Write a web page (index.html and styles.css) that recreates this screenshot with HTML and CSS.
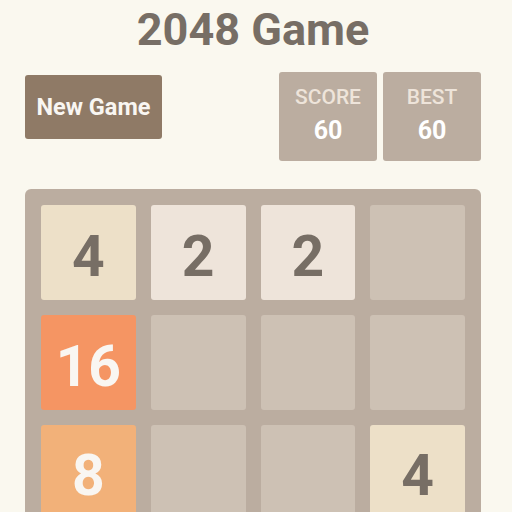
FILE: index.html
```html
<!DOCTYPE html>
<html>
<head>
<meta charset="utf-8">
<link rel="stylesheet" href="styles.css">
</head>
<body>
<div class="container">
  <h1 class="title">2048 Game</h1>
  <div class="toolbar">
    <button class="new-game">New Game</button>
    <div class="scores">
      <div class="score-box"><div class="score-label">SCORE</div><div class="score-value">60</div></div>
      <div class="score-box"><div class="score-label">BEST</div><div class="score-value">60</div></div>
    </div>
  </div>
  <div class="board">
    <div class="tile t4">4</div>
    <div class="tile t2">2</div>
    <div class="tile t2">2</div>
    <div class="tile"></div>
    <div class="tile t16">16</div>
    <div class="tile"></div>
    <div class="tile"></div>
    <div class="tile"></div>
    <div class="tile t8">8</div>
    <div class="tile"></div>
    <div class="tile"></div>
    <div class="tile t4">4</div>
    <div class="tile"></div>
    <div class="tile"></div>
    <div class="tile"></div>
    <div class="tile"></div>
  </div>
</div>
</body>
</html>
```

FILE: styles.css
```css
html, body {
  margin: 0;
  padding: 0;
  background: #faf8ef;
  overflow: hidden;
}
body {
  font-family: Roboto, "Liberation Sans", sans-serif;
  color: #776e65;
}
.container {
  width: 456px;
  margin-left: 25px;
  padding-top: 7px;
}
.title {
  margin: 0;
  font-size: 45px;
  line-height: 45px;
  font-weight: 700;
  text-align: center;
  color: #776e65;
}
.toolbar {
  display: flex;
  justify-content: space-between;
  align-items: flex-start;
  margin-top: 20px;
}
.new-game {
  margin-top: 3px;
  width: 137px;
  height: 64px;
  border: none;
  border-radius: 3px;
  background: #8f7a66;
  color: #f9f6f2;
  font-family: Roboto, "Liberation Sans", sans-serif;
  font-weight: 700;
  font-size: 23.5px;
  padding: 0;
}
.scores {
  display: flex;
  gap: 6px;
}
.score-box {
  width: 98px;
  height: 89px;
  background: #bbada0;
  border-radius: 3px;
  display: flex;
  flex-direction: column;
  align-items: center;
  box-sizing: border-box;
  padding-top: 12px;
}
.score-label {
  font-size: 21px;
  line-height: 26px;
  font-weight: 500;
  color: #eee4da;
}
.score-value {
  margin-top: 6px;
  font-size: 25px;
  line-height: 30px;
  font-weight: 700;
  color: #ffffff;
}
.board {
  margin-top: 28px;
  background: #bbada0;
  border-radius: 6px;
  padding: 16px;
  display: grid;
  grid-template-columns: repeat(4, 1fr);
  grid-auto-rows: 94.75px;
  gap: 15px;
}
.tile {
  background: #cdc1b4;
  border-radius: 3px;
  display: flex;
  align-items: center;
  justify-content: center;
  font-size: 57px;
  font-weight: 700;
  color: #776e65;
  padding-top: 8px;
  box-sizing: border-box;
}
.t2 { background: #eee4da; }
.t4 { background: #ede0c8; }
.t8 { background: #f2b179; color: #f9f6f2; }
.t16 { background: #f59563; color: #f9f6f2; }
```
